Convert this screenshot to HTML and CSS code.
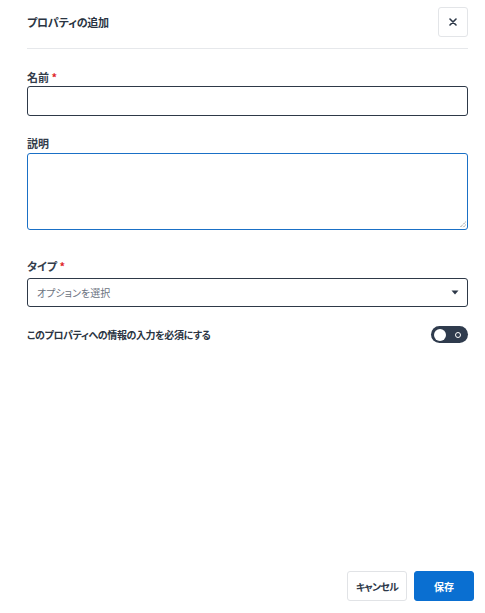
FILE: index.html
```html
<!DOCTYPE html>
<html lang="ja">
<head>
<meta charset="utf-8">
<link rel="stylesheet" href="styles.css">
</head>
<body>
<div class="dialog">
  <div class="header">
    <h1 class="title">プロパティの追加</h1>
    <button class="close" aria-label="閉じる">
      <svg width="8" height="8" viewBox="0 0 8 8"><path d="M1 1L7 7M7 1L1 7" stroke="#2d3848" stroke-width="1.6" stroke-linecap="round"/></svg>
    </button>
  </div>
  <div class="divider"></div>
  <div class="body">
    <div class="field f-name">
      <label class="label">名前 <span class="req">*</span></label>
      <div class="input"></div>
    </div>
    <div class="field f-desc">
      <label class="label">説明</label>
      <div class="textarea">
        <svg class="grip" width="7" height="7" viewBox="0 0 7 7"><path d="M6.5 1L1 6.5M6.5 4L4 6.5" stroke="#666" stroke-width="1" stroke-dasharray="1 1"/></svg>
      </div>
    </div>
    <div class="field f-type">
      <label class="label">タイプ <span class="req">*</span></label>
      <div class="select">
        <span class="placeholder">オプションを選択</span>
        <svg class="caret" width="8" height="5" viewBox="0 0 8 5"><path d="M0.5 0.5H7.5L4 4.5Z" fill="#2d3848"/></svg>
      </div>
    </div>
    <div class="toggle-row">
      <span class="toggle-label">このプロパティへの情報の入力を必須にする</span>
      <span class="toggle"><span class="knob"></span><span class="ring"></span></span>
    </div>
  </div>
  <div class="footer">
    <button class="btn btn-cancel">キャンセル</button>
    <button class="btn btn-save">保存</button>
  </div>
</div>
</body>
</html>
```

FILE: styles.css
```css
* { box-sizing: border-box; }
html, body { margin: 0; padding: 0; background: #fff; }
body {
  font-family: "Noto Sans CJK JP", "Noto Sans", sans-serif;
  font-feature-settings: "palt";
  color: #2d3848;
}
.dialog {
  height: 613px;
  display: flex;
  flex-direction: column;
}
.header {
  display: flex;
  align-items: center;
  justify-content: space-between;
  padding: 7px 17px 11px 27px;
}
.title {
  margin: 0;
  font-size: 11px;
  letter-spacing: -0.2px;
  font-weight: 700;
  line-height: 30px;
  color: #2a3442;
}
.close {
  width: 30px;
  height: 30px;
  border: 1px solid #e3e5e8;
  border-radius: 3px;
  background: #fff;
  display: flex;
  align-items: center;
  justify-content: center;
  padding: 0;
}
.divider {
  height: 1px;
  background: #e6e8eb;
  margin: 0 17px 0 27px;
}
.body {
  padding: 0 17px 0 27px;
}
.field { display: flex; flex-direction: column; }
.label {
  font-size: 11px;
  font-weight: 700;
  line-height: 16px;
  color: #333d4b;
}
.req { color: #e0262b; font-weight: 700; }
.f-name { margin-top: 20px; }
.f-name .label { margin-bottom: 1px; }
.input {
  height: 30px;
  border: 1px solid #2e3948;
  border-radius: 3px;
}
.f-desc { margin-top: 19px; }
.f-desc .label { margin-bottom: 2px; }
.textarea {
  height: 77px;
  border: 1px solid #1a70c6;
  border-radius: 3px;
  position: relative;
}
.grip { position: absolute; right: 1px; bottom: 1px; }
.f-type { margin-top: 28px; }
.f-type .label { margin-bottom: 4px; }
.select {
  height: 29px;
  border: 1px solid #2e3948;
  border-radius: 3px;
  display: flex;
  align-items: center;
  justify-content: space-between;
  padding: 0 8px 0 9px;
}
.placeholder {
  font-size: 10px;
  color: #6b7280;
  font-weight: 400;
}
.toggle-row {
  margin-top: 19px;
  display: flex;
  align-items: center;
  justify-content: space-between;
  height: 17px;
}
.toggle-label {
  font-size: 10px;
  letter-spacing: -0.4px;
  font-weight: 700;
  color: #2a3442;
}
.toggle {
  width: 37px;
  height: 17px;
  border-radius: 9px;
  background: #2f3b4d;
  display: flex;
  align-items: center;
  justify-content: space-between;
  padding: 0 7px 0 3px;
}
.knob {
  width: 12px;
  height: 12px;
  border-radius: 50%;
  background: #fff;
}
.ring {
  width: 6px;
  height: 6px;
  border-radius: 50%;
  border: 1.5px solid #fff;
}
.footer {
  margin-top: auto;
  display: flex;
  justify-content: flex-end;
  gap: 7px;
  padding: 0 11px 12px 0;
}
.btn {
  height: 30px;
  width: 60px;
  border-radius: 3px;
  font-family: inherit;
  font-feature-settings: "palt";
  font-size: 10px;
  font-weight: 700;
  padding: 0;
}
.btn-cancel {
  background: #fff;
  border: 1px solid #e1e3e6;
  color: #2d3848;
  letter-spacing: -0.8px;
}
.btn-save {
  background: #0a6fd1;
  border: 1px solid #0a6fd1;
  color: #fff;
}
```
